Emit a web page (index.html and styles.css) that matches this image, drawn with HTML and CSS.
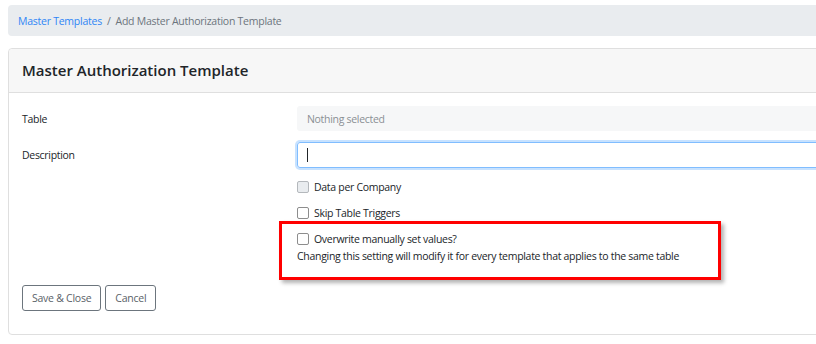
FILE: index.html
```html
<!DOCTYPE html>
<html>
<head>
<meta charset="utf-8">
<link rel="stylesheet" href="styles.css">
</head>
<body>
<div class="page">
  <nav class="crumbs">
    <a class="crumb-link" href="#">Master Templates</a>
    <span class="crumb-sep">/</span>
    <span class="crumb-current">Add Master Authorization Template</span>
  </nav>
  <section class="card">
    <header class="card-header">
      <h1 class="card-title">Master Authorization Template</h1>
    </header>
    <div class="card-body">
      <div class="form-row">
        <label class="form-label">Table</label>
        <div class="select-box">Nothing selected</div>
      </div>
      <div class="form-row">
        <label class="form-label">Description</label>
        <div class="text-input"><span class="caret"></span></div>
      </div>
      <div class="form-row">
        <span></span>
        <div class="check-list">
          <label class="check"><span class="box box-disabled"></span>Data per Company</label>
          <label class="check"><span class="box"></span>Skip Table Triggers</label>
          <div class="overwrite">
            <label class="check"><span class="box"></span>Overwrite manually set values?</label>
            <div class="help">Changing this setting will modify it for every template that applies to the same table</div>
            <div class="highlight"></div>
          </div>
        </div>
      </div>
      <div class="actions">
        <button class="btn">Save &amp; Close</button>
        <button class="btn">Cancel</button>
      </div>
    </div>
  </section>
</div>
</body>
</html>
```
FILE: styles.css
```css
html, body {
  margin: 0;
  padding: 0;
  background: #ffffff;
  overflow: hidden;
}
body {
  font-family: "Open Sans", "Noto Sans", sans-serif;
  font-size: 10.5px;
  letter-spacing: -0.3px;
  color: #212529;
}
.page {
  width: 1000px;
  padding: 5px 0 0 8px;
}
.crumbs {
  height: 31px;
  background: #e9ecef;
  border-radius: 4px;
  display: flex;
  align-items: center;
  padding-left: 10px;
  gap: 5px;
  letter-spacing: -0.25px;
}
.crumb-link {
  color: #2f86f6;
  text-decoration: none;
}
.crumb-sep, .crumb-current {
  color: #6c757d;
}
.card {
  margin-top: 12px;
  border: 1px solid #dfdfdf;
  border-radius: 4px;
  height: 287px;
  box-sizing: border-box;
}
.card-header {
  height: 43px;
  background: #f7f7f7;
  border-bottom: 1px solid #dfdfdf;
  display: flex;
  align-items: center;
  padding: 0 13px;
  border-radius: 4px 4px 0 0;
}
.card-title {
  margin: 0 0 2px 0;
  font-size: 15px;
  font-weight: 600;
  letter-spacing: 0;
  color: #212529;
}
.card-body {
  padding: 13px 13px;
}
.form-row {
  display: grid;
  grid-template-columns: 275px 1fr;
  align-items: center;
  margin-bottom: 11px;
}
.form-label {
  color: #212529;
}
.select-box {
  height: 25px;
  background: #f6f7f8;
  border-radius: 3px;
  display: flex;
  align-items: center;
  padding-left: 10px;
  color: #8a8f94;
}
.text-input {
  height: 26px;
  box-sizing: border-box;
  border: 1px solid #80bdff;
  border-radius: 3px;
  box-shadow: 0 0 0 2px rgba(0, 123, 255, 0.22);
  display: flex;
  align-items: center;
  padding-left: 9px;
}
.caret {
  width: 1px;
  height: 14px;
  background: #212529;
}
.check-list {
  display: flex;
  flex-direction: column;
  margin-top: -5px;
}
.check {
  display: flex;
  align-items: center;
  gap: 5px;
  height: 26px;
}
.box {
  width: 10px;
  height: 10px;
  border: 1px solid #8d8d8d;
  border-radius: 2px;
  background: #fff;
}
.box-disabled {
  background: #e9ecef;
  border-color: #b4b8bc;
}
.overwrite {
  position: relative;
}
.overwrite .check {
  height: 18px;
  margin-top: 4px;
}
.help {
  margin-top: 1px;
}
.highlight {
  position: absolute;
  left: -18px;
  top: -5px;
  width: 436px;
  height: 53px;
  border: 3px solid #ff0000;
  box-shadow: 3px 3px 4px rgba(0, 0, 0, 0.3);
}
.actions {
  display: flex;
  gap: 4px;
  margin-top: 22px;
}
.btn {
  height: 26px;
  padding: 0 9px;
  border: 1px solid #6c757d;
  border-radius: 3px;
  background: #fff;
  color: #5a6268;
  font-family: inherit;
  font-size: 10.5px;
  letter-spacing: -0.25px;
}
```
